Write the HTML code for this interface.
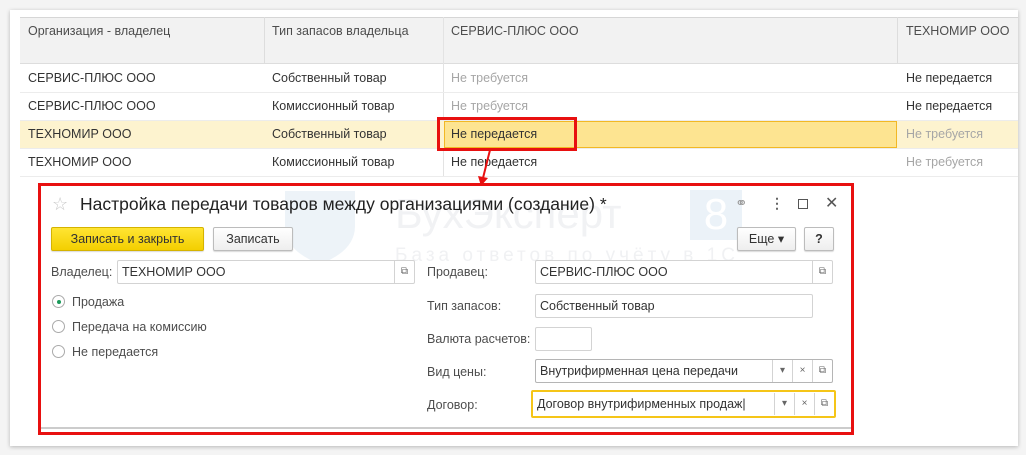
<!DOCTYPE html>
<html><head><meta charset="utf-8"><style>
*{box-sizing:border-box;margin:0;padding:0}
body{width:1026px;height:455px;background:#f4f4f4;font-family:"Liberation Sans",Arial,sans-serif;font-size:12.5px;color:#333;position:relative;overflow:hidden}
.a{position:absolute}
.panel{left:10px;top:10px;width:1008px;height:436px;background:#fff;box-shadow:0 1px 4px rgba(0,0,0,.25)}
.hdr{background:#f2f2f2;border-bottom:1px solid #ddd}
.cell{position:absolute;white-space:nowrap;line-height:28px;padding-left:8px}
.vl{position:absolute;width:1px;background:#e3e3e3}
.hl{position:absolute;height:1px;background:#ececec}
.grey{color:#a6a6a6}
.fld{position:absolute;border:1px solid #d3d3d3;border-radius:2px;background:#fff;height:24px;line-height:22px;padding-left:4px;white-space:nowrap;color:#333}
.btn{position:absolute;border:1px solid #bcbcbc;border-radius:2px;background:linear-gradient(#fff,#eee);height:24px;line-height:22px;text-align:center;box-shadow:0 1px 1px rgba(0,0,0,.15)}
.lab{position:absolute;color:#4d4d4d;white-space:nowrap}
.ic{position:absolute;width:20px;text-align:center;color:#666;font-size:10px;line-height:22px;border-left:1px solid #d3d3d3;top:0;height:22px}
.rad{position:absolute;width:13px;height:13px;border:1px solid #aaa;border-radius:50%;background:#fff}
</style></head><body>
<div class="a panel"></div>
<div class="a hdr" style="left:20px;top:17px;width:998px;height:47px;border-top:1px solid #d6d6d6"></div>
<div class="vl" style="left:264px;top:17px;height:47px;background:#ddd"></div>
<div class="vl" style="left:443px;top:17px;height:159px"></div>
<div class="vl" style="left:897px;top:17px;height:47px;background:#ddd"></div>
<div class="cell" style="left:20px;top:17px;color:#4d4d4d">Организация - владелец</div>
<div class="cell" style="left:264px;top:17px;color:#4d4d4d">Тип запасов владельца</div>
<div class="cell" style="left:443px;top:17px;color:#4d4d4d">СЕРВИС-ПЛЮС ООО</div>
<div class="cell" style="left:898px;top:17px;color:#4d4d4d">ТЕХНОМИР ООО</div>
<div class="hl" style="left:20px;top:92px;width:998px"></div>
<div class="hl" style="left:20px;top:120px;width:998px"></div>
<div class="hl" style="left:20px;top:148px;width:998px"></div>
<div class="hl" style="left:20px;top:176px;width:998px"></div>
<div class="a" style="left:20px;top:121px;width:998px;height:27px;background:#fdf3cf"></div>
<div class="a" style="left:444px;top:121px;width:453px;height:27px;background:#fde491;border:1px solid #f2b824"></div>
<div class="cell" style="left:20px;top:64px">СЕРВИС-ПЛЮС ООО</div>
<div class="cell" style="left:264px;top:64px">Собственный товар</div>
<div class="cell grey" style="left:443px;top:64px">Не требуется</div>
<div class="cell" style="left:898px;top:64px">Не передается</div>
<div class="cell" style="left:20px;top:92px">СЕРВИС-ПЛЮС ООО</div>
<div class="cell" style="left:264px;top:92px">Комиссионный товар</div>
<div class="cell grey" style="left:443px;top:92px">Не требуется</div>
<div class="cell" style="left:898px;top:92px">Не передается</div>
<div class="cell" style="left:20px;top:120px">ТЕХНОМИР ООО</div>
<div class="cell" style="left:264px;top:120px">Собственный товар</div>
<div class="cell" style="left:443px;top:120px">Не передается</div>
<div class="cell grey" style="left:898px;top:120px">Не требуется</div>
<div class="cell" style="left:20px;top:148px">ТЕХНОМИР ООО</div>
<div class="cell" style="left:264px;top:148px">Комиссионный товар</div>
<div class="cell" style="left:443px;top:148px">Не передается</div>
<div class="cell grey" style="left:898px;top:148px">Не требуется</div>
<div class="a" style="left:437px;top:117px;width:140px;height:34px;border:3px solid #e81010"></div>
<svg class="a" style="left:470px;top:148px" width="30" height="40"><line x1="20" y1="2" x2="13" y2="30" stroke="#e81010" stroke-width="2"/><polygon points="8,28 18,30 11,38" fill="#e81010"/></svg>
<svg class="a" style="left:280px;top:186px" width="80" height="80"><path d="M5 5 H75 V40 Q75 65 40 78 Q5 65 5 40Z" fill="#edf3f8"/></svg>
<div class="a" style="left:395px;top:190px;font-size:42px;color:#f1f2f4;white-space:nowrap">БухЭксперт</div>
<div class="a" style="left:690px;top:190px;width:52px;height:50px;background:#ebf2f8;color:#fff;font-size:44px;text-align:center;line-height:50px">8</div>
<div class="a" style="left:395px;top:245px;font-size:19px;color:#f0f1f3;letter-spacing:4px;white-space:nowrap">База ответов по учёту в 1С</div>
<div class="a" style="left:38px;top:183px;width:816px;height:252px;border:3px solid #e81010"></div>
<div class="a" style="left:41px;top:427px;width:810px;height:2px;background:#ccc"></div>
<div class="a" style="left:52px;top:194px;font-size:18px;color:#c8c8c8">☆</div>
<div class="a" style="left:80px;top:194px;font-size:17.5px;color:#222;white-space:nowrap">Настройка передачи товаров между организациями (создание) *</div>
<div class="a" style="left:735px;top:194px;font-size:15px;color:#999">⚭</div>
<div class="a" style="left:770px;top:195px;font-size:14px;color:#666;font-weight:bold">⋮</div>
<div class="a" style="left:798px;top:199px;width:10px;height:10px;border:1.5px solid #555"></div>
<div class="a" style="left:825px;top:193px;font-size:16px;color:#555">✕</div>
<div class="btn" style="left:51px;top:227px;width:153px;background:linear-gradient(#ffe533,#f3cf00);border-color:#d5b300;color:#333">Записать и закрыть</div>
<div class="btn" style="left:213px;top:227px;width:80px">Записать</div>
<div class="btn" style="left:737px;top:227px;width:59px">Еще ▾</div>
<div class="btn" style="left:804px;top:227px;width:30px;font-weight:bold">?</div>
<div class="lab" style="left:51px;top:265px">Владелец:</div>
<div class="fld" style="left:117px;top:260px;width:298px">ТЕХНОМИР ООО<div class="ic" style="right:0">⧉</div></div>
<div class="rad" style="left:52px;top:295px"><div style="position:absolute;left:3.5px;top:3.5px;width:4px;height:4px;border-radius:50%;background:#1a9a5a"></div></div>
<div class="lab" style="left:72px;top:295px">Продажа</div>
<div class="rad" style="left:52px;top:320px"></div>
<div class="lab" style="left:72px;top:320px">Передача на комиссию</div>
<div class="rad" style="left:52px;top:345px"></div>
<div class="lab" style="left:72px;top:345px">Не передается</div>
<div class="lab" style="left:427px;top:265px">Продавец:</div>
<div class="fld" style="left:535px;top:260px;width:298px">СЕРВИС-ПЛЮС ООО<div class="ic" style="right:0">⧉</div></div>
<div class="lab" style="left:427px;top:299px">Тип запасов:</div>
<div class="fld" style="left:535px;top:294px;width:278px">Собственный товар</div>
<div class="lab" style="left:427px;top:332px">Валюта расчетов:</div>
<div class="fld" style="left:535px;top:327px;width:57px"></div>
<div class="lab" style="left:427px;top:365px">Вид цены:</div>
<div class="fld" style="left:535px;top:359px;width:298px;border-color:#b5b5b5">Внутрифирменная цена передачи<div class="ic" style="right:40px">▾</div><div class="ic" style="right:20px">×</div><div class="ic" style="right:0">⧉</div></div>
<div class="lab" style="left:427px;top:398px">Договор:</div>
<div class="fld" style="left:531px;top:390px;width:305px;height:28px;border:2px solid #f5c518;line-height:24px">Договор внутрифирменных продаж|<div class="ic" style="right:40px;top:1px">▾</div><div class="ic" style="right:20px;top:1px">×</div><div class="ic" style="right:0;top:1px">⧉</div></div>
</body></html>
